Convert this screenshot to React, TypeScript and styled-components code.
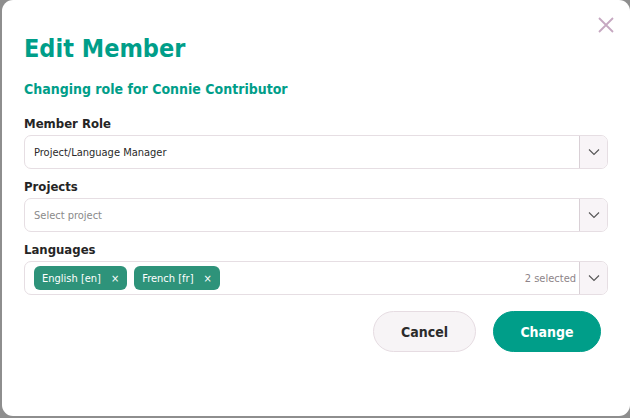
import React from 'react';
import styled, { createGlobalStyle } from 'styled-components';

const GlobalStyle = createGlobalStyle`
  html, body {
    margin: 0;
    padding: 0;
    width: 630px;
    height: 418px;
    overflow: hidden;
    background: #8e8e8e;
  }
  body {
    font-family: "DejaVu Sans Condensed", "DejaVu Sans", sans-serif;
  }
`;

const Backdrop = styled.div`
  width: 630px;
  height: 418px;
  padding: 0 0 2px 2px;
  box-sizing: border-box;
  background: #8e8e8e;
`;

const Dialog = styled.div`
  position: relative;
  width: 628px;
  height: 416px;
  box-sizing: border-box;
  background: #fff;
  border-radius: 11px;
  padding: 34px 22px 0 22px;
`;

const CloseButton = styled.button`
  position: absolute;
  top: 15px;
  right: 14px;
  width: 20px;
  height: 20px;
  padding: 0;
  border: none;
  background: none;
  cursor: pointer;
`;

const Title = styled.h1`
  margin: 0;
  font-size: 25px;
  font-weight: 700;
  color: #009e89;
  line-height: 30px;
`;

const Subtitle = styled.h2`
  margin: 16px 0 0;
  font-size: 14px;
  font-weight: 700;
  color: #009e89;
  line-height: 18px;
`;

const Field = styled.div<{ $first?: boolean }>`
  margin-top: ${(p) => (p.$first ? '18px' : '10px')};
`;

const Label = styled.div`
  font-size: 13px;
  font-weight: 700;
  color: #252525;
  line-height: 16px;
  margin-bottom: 3px;
`;

const SelectBox = styled.div`
  display: flex;
  align-items: stretch;
  height: 34px;
  box-sizing: border-box;
  border: 1px solid #e6dee3;
  border-radius: 7px;
  overflow: hidden;
  background: #fff;
`;

const Value = styled.div<{ $placeholder?: boolean }>`
  flex: 1;
  display: flex;
  align-items: center;
  gap: 7px;
  padding: 0 9px 0 9px;
  font-size: 11px;
  color: ${(p) => (p.$placeholder ? '#8a8a8a' : '#2a2a2a')};
`;

const Count = styled.span`
  margin-left: auto;
  font-size: 11px;
  color: #8d8489;
  margin-right: -6px;
`;

const Toggle = styled.div`
  width: 27px;
  border-left: 1px solid #d9d0d6;
  background: #f8f4f7;
  display: flex;
  align-items: center;
  justify-content: center;
`;

const Chip = styled.span`
  display: inline-flex;
  align-items: center;
  height: 24px;
  padding: 0 8px;
  border-radius: 6px;
  background: #2e937a;
  color: #fff;
  font-size: 11px;
  gap: 10px;
`;

const ChipX = styled.span`
  font-size: 11px;
  line-height: 1;
`;

const Actions = styled.div`
  display: flex;
  justify-content: flex-end;
  gap: 17px;
  margin-top: 16px;
  padding-right: 7px;
`;

const Button = styled.button<{ $primary?: boolean }>`
  height: 41px;
  border-radius: 21px;
  font-family: inherit;
  font-size: 14px;
  font-weight: 700;
  cursor: pointer;
  border: 1px solid ${(p) => (p.$primary ? '#009e89' : '#e6dce2')};
  background: ${(p) => (p.$primary ? '#009e89' : '#f7f4f6')};
  color: ${(p) => (p.$primary ? '#fff' : '#2b2b2b')};
  width: ${(p) => (p.$primary ? '108px' : '103px')};
`;

const Chevron = () => (
  <svg width="12" height="8" viewBox="0 0 12 8">
    <path d="M1 1.5l5 5 5-5" fill="none" stroke="#555" strokeWidth="1.1" />
  </svg>
);

export default function App() {
  return (
    <>
      <GlobalStyle />
      <Backdrop>
        <Dialog>
          <CloseButton aria-label="Close">
            <svg width="20" height="20" viewBox="0 0 20 20">
              <path d="M3 3l14 14M17 3L3 17" stroke="#c6a8c1" strokeWidth="1.8" />
            </svg>
          </CloseButton>
          <Title>Edit Member</Title>
          <Subtitle>Changing role for Connie Contributor</Subtitle>

          <Field $first>
            <Label>Member Role</Label>
            <SelectBox>
              <Value>Project/Language Manager</Value>
              <Toggle><Chevron /></Toggle>
            </SelectBox>
          </Field>

          <Field>
            <Label>Projects</Label>
            <SelectBox>
              <Value $placeholder>Select project</Value>
              <Toggle><Chevron /></Toggle>
            </SelectBox>
          </Field>

          <Field>
            <Label>Languages</Label>
            <SelectBox>
              <Value>
                <Chip>English [en]<ChipX>×</ChipX></Chip>
                <Chip>French [fr]<ChipX>×</ChipX></Chip>
                <Count>2 selected</Count>
              </Value>
              <Toggle><Chevron /></Toggle>
            </SelectBox>
          </Field>

          <Actions>
            <Button>Cancel</Button>
            <Button $primary>Change</Button>
          </Actions>
        </Dialog>
      </Backdrop>
    </>
  );
}
